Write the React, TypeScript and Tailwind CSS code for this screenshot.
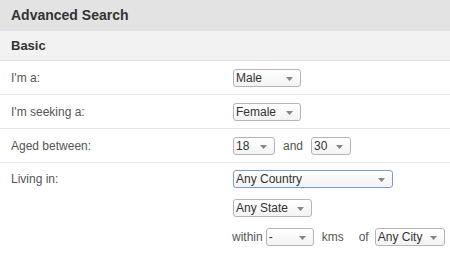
import React from "react";

function Sel({ value, w, focus = false }: { value: string; w: string; focus?: boolean }) {
  return (
    <div
      className={`relative flex h-[18px] ${w} items-center rounded-[3px] border bg-gradient-to-b from-white to-[#f3f3f3] pl-[2px] text-[12px] leading-none text-[#333] ${
        focus ? "border-[#7a9cd3]" : "border-[#b5b5b5]"
      }`}
    >
      <span>{value}</span>
      <svg className="absolute right-[7px] top-[7px]" width="7" height="4" viewBox="0 0 7 4">
        <path d="M0 0 L7 0 L3.5 4 Z" fill="#858585" />
      </svg>
    </div>
  );
}

function Row({ label, children }: { label: string; children: React.ReactNode }) {
  return (
    <div className="flex h-[34px] items-center border-b border-[#e6e6e6]">
      <div className="w-[233px] pl-[11px] text-[12px] text-[#555]">{label}</div>
      <div className="flex items-center">{children}</div>
    </div>
  );
}

export default function App() {
  return (
    <div className="h-[258px] w-[450px] overflow-hidden bg-white" style={{ fontFamily: '"Liberation Sans", Arial, sans-serif' }}>
      <div className="flex h-[31px] items-center bg-[#e3e3e3] pl-[11px] text-[14px] font-bold text-[#333]">
        Advanced Search
      </div>
      <div className="flex h-[30px] items-center border-b border-[#dedede] bg-[#f2f2f2] pl-[11px] text-[13px] font-bold text-[#333]">
        Basic
      </div>
      <Row label="I'm a:">
        <Sel value="Male" w="w-[68px]" />
      </Row>
      <Row label="I'm seeking a:">
        <Sel value="Female" w="w-[68px]" />
      </Row>
      <Row label="Aged between:">
        <Sel value="18" w="w-[42px]" />
        <span className="ml-[8px] mr-[8px] text-[12px] text-[#555]">and</span>
        <Sel value="30" w="w-[40px]" />
      </Row>
      <div className="flex pt-[7px]">
        <div className="w-[233px] pl-[11px] text-[12px] leading-[18px] text-[#555]">Living in:</div>
        <div className="flex flex-col gap-[11px]">
          <Sel value="Any Country" w="w-[160px]" focus />
          <Sel value="Any State" w="w-[79px]" />
          <div className="-ml-[1px] flex items-center text-[12px] text-[#555]">
            <span className="mr-[3px]">within</span>
            <Sel value="-" w="w-[48px]" />
            <span className="ml-[8px]">kms</span>
            <span className="ml-[15px]">of</span>
            <span className="ml-[6px]">
              <Sel value="Any City" w="w-[70px]" />
            </span>
          </div>
        </div>
      </div>
    </div>
  );
}
